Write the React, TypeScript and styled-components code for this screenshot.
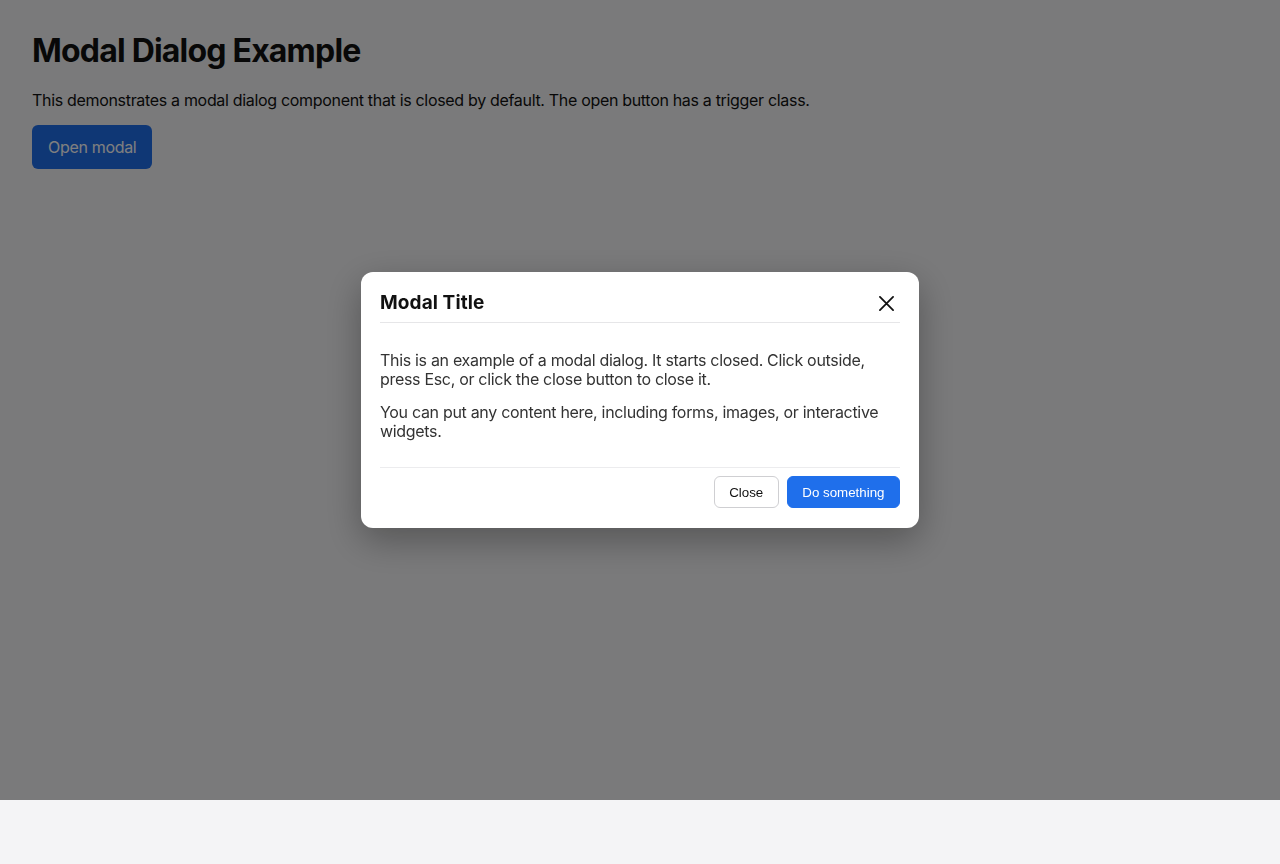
import React from 'react';
import styled, { createGlobalStyle } from 'styled-components';

const GlobalStyle = createGlobalStyle`
  html, body {
    margin: 0;
    padding: 0;
    background: #f4f4f6;
    font-family: Inter, "Noto Sans", "Liberation Sans", sans-serif;
    color: #111;
  }
`;

const Page = styled.main`
  padding: 32px;
`;

const Heading = styled.h1`
  margin: 0 0 20px;
  font-size: 32px;
  font-weight: 700;
  line-height: 1.21;
  letter-spacing: -0.8px;
  color: #111;
`;

const Intro = styled.p`
  margin: 0 0 15px;
  font-size: 16px;
  line-height: 1.21;
  letter-spacing: -0.32px;
  color: #111;
`;

const TriggerButton = styled.button`
  display: inline-flex;
  align-items: center;
  height: 44px;
  padding: 0 16px;
  border: none;
  border-radius: 6px;
  background: #1f6feb;
  color: #fff;
  font-family: Inter, "Noto Sans", sans-serif;
  font-size: 16px;
  letter-spacing: -0.32px;
  cursor: pointer;
`;

const Overlay = styled.div`
  position: fixed;
  top: 0;
  left: 0;
  width: 100%;
  height: 800px;
  background: rgba(0, 0, 0, 0.5);
  display: flex;
  align-items: center;
  justify-content: center;
`;

const Dialog = styled.div`
  width: 558px;
  box-sizing: border-box;
  padding: 20px 19px;
  background: #fff;
  border-radius: 12px;
  box-shadow: 0 12px 36px rgba(0, 0, 0, 0.3);
`;

const Header = styled.div`
  display: flex;
  align-items: center;
  justify-content: space-between;
  padding-bottom: 8px;
  border-bottom: 1px solid #e6e6e8;
`;

const Title = styled.h2`
  margin: 0;
  font-size: 19px;
  font-weight: 700;
  line-height: 22px;
  letter-spacing: 0.1px;
  color: #111;
`;

const CloseIcon = styled.button`
  display: flex;
  align-items: center;
  justify-content: center;
  width: 28px;
  height: 22px;
  padding: 0;
  border: none;
  background: transparent;
  color: #111;
  cursor: pointer;
`;

const Body = styled.div`
  display: flex;
  flex-direction: column;
  gap: 14px;
  padding: 28px 0 26px;
`;

const BodyText = styled.p`
  margin: 0;
  font-size: 16px;
  line-height: 19px;
  letter-spacing: -0.31px;
  color: #333;
`;

const Footer = styled.div`
  display: flex;
  justify-content: flex-end;
  gap: 8px;
  padding-top: 8px;
  border-top: 1px solid #ececee;
`;

const FooterButton = styled.button<{ $primary?: boolean }>`
  height: 32px;
  padding: 0 14.5px;
  border-radius: 6px;
  border: 1px solid ${(p) => (p.$primary ? '#1f6feb' : '#cfcfd2')};
  background: ${(p) => (p.$primary ? '#1f6feb' : '#fff')};
  color: ${(p) => (p.$primary ? '#fff' : '#111')};
  font-family: "Liberation Sans", Arial, sans-serif;
  font-size: 13.33px;
  cursor: pointer;
`;

export default function App() {
  return (
    <>
      <GlobalStyle />
      <Page>
        <Heading>Modal Dialog Example</Heading>
        <Intro>
          This demonstrates a modal dialog component that is closed by default. The open button has a trigger class.
        </Intro>
        <TriggerButton className="trigger">Open modal</TriggerButton>
      </Page>
      <Overlay>
        <Dialog role="dialog" aria-modal="true">
          <Header>
            <Title>Modal Title</Title>
            <CloseIcon aria-label="Close">
              <svg width="15" height="15" viewBox="0 0 16 16" fill="none">
                <path d="M1 1L15 15M15 1L1 15" stroke="currentColor" strokeWidth="1.9" strokeLinecap="round" />
              </svg>
            </CloseIcon>
          </Header>
          <Body>
            <BodyText>
              This is an example of a modal dialog. It starts closed. Click outside, press Esc, or click the close button to close it.
            </BodyText>
            <BodyText>
              You can put any content here, including forms, images, or interactive widgets.
            </BodyText>
          </Body>
          <Footer>
            <FooterButton>Close</FooterButton>
            <FooterButton $primary>Do something</FooterButton>
          </Footer>
        </Dialog>
      </Overlay>
    </>
  );
}
